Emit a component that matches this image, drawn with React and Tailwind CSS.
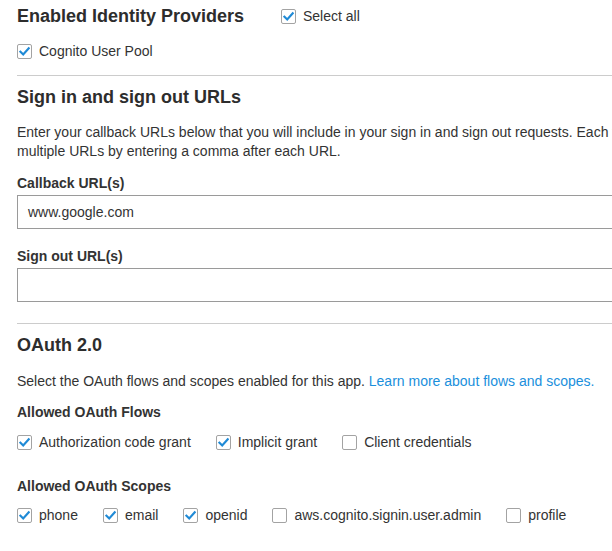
import React from "react";

function Check({ checked }) {
  return (
    <span className="inline-flex w-[15px] h-[15px] shrink-0 items-center justify-center rounded-[2px] border border-[#a3a3a3] bg-white">
      {checked && (
        <svg className="w-[11px] h-[11px]" viewBox="0 0 12 12" fill="none">
          <path d="M1.6 6.2L4.6 9.2L10.6 2.6" stroke="#1f8ad6" strokeWidth="2.4" strokeLinecap="square" />
        </svg>
      )}
    </span>
  );
}

function Option({ label, checked }) {
  return (
    <label className="flex items-center gap-[7px]">
      <Check checked={checked} />
      <span>{label}</span>
    </label>
  );
}

export default function App() {
  const flows = [
    { label: "Authorization code grant", checked: true },
    { label: "Implicit grant", checked: true },
    { label: "Client credentials", checked: false },
  ];
  const scopes = [
    { label: "phone", checked: true },
    { label: "email", checked: true },
    { label: "openid", checked: true },
    { label: "aws.cognito.signin.user.admin", checked: false },
    { label: "profile", checked: false },
  ];

  return (
    <div className="w-[612px] h-[551px] overflow-hidden bg-white text-[#333] text-[14px] font-['Liberation_Sans',Arial,sans-serif]">
      <div className="w-[760px] pl-[17px] pt-[4px]">
        {/* Identity providers */}
        <div className="flex items-center h-[24px]">
          <h2 className="w-[264px] text-[18px] font-bold text-[#2d2d2d]">Enabled Identity Providers</h2>
          <Option label="Select all" checked />
        </div>
        <div className="flex items-center h-[20px] mt-[13px]">
          <Option label="Cognito User Pool" checked />
        </div>
        <hr className="mt-[14px] border-0 border-t border-[#cccccc]" />

        {/* URLs */}
        <h2 className="mt-[9px] h-[24px] leading-[24px] text-[18px] font-bold text-[#2d2d2d]">Sign in and sign out URLs</h2>
        <p className="mt-[14px] w-[720px] leading-[19px]">
          Enter your callback URLs below that you will include in your sign in and sign out requests. Each field can contain multiple URLs by entering a comma after each URL.
        </p>
        <div className="mt-[12px] leading-[20px] font-bold">Callback URL(s)</div>
        <div className="mt-[2px] h-[34px] border border-[#9a9a9a] flex items-center pl-[10px]">www.google.com</div>
        <div className="mt-[17px] leading-[20px] font-bold">Sign out URL(s)</div>
        <div className="mt-[2px] h-[34px] border border-[#9a9a9a]"></div>
        <hr className="mt-[21px] border-0 border-t border-[#cccccc]" />

        {/* OAuth */}
        <h2 className="mt-[9px] h-[24px] leading-[24px] text-[18px] font-bold text-[#2d2d2d]">OAuth 2.0</h2>
        <p className="mt-[14px] leading-[20px]">
          Select the OAuth flows and scopes enabled for this app.{" "}
          <a className="text-[#1a8fdc]">Learn more about flows and scopes.</a>
        </p>
        <div className="mt-[11px] leading-[20px] font-bold">Allowed OAuth Flows</div>
        <div className="mt-[10px] h-[20px] flex items-center gap-[25px]">
          {flows.map((f) => (
            <Option key={f.label} label={f.label} checked={f.checked} />
          ))}
        </div>
        <div className="mt-[24px] leading-[20px] font-bold">Allowed OAuth Scopes</div>
        <div className="mt-[9px] h-[20px] flex items-center gap-[25px]">
          {scopes.map((s) => (
            <Option key={s.label} label={s.label} checked={s.checked} />
          ))}
        </div>
      </div>
    </div>
  );
}
